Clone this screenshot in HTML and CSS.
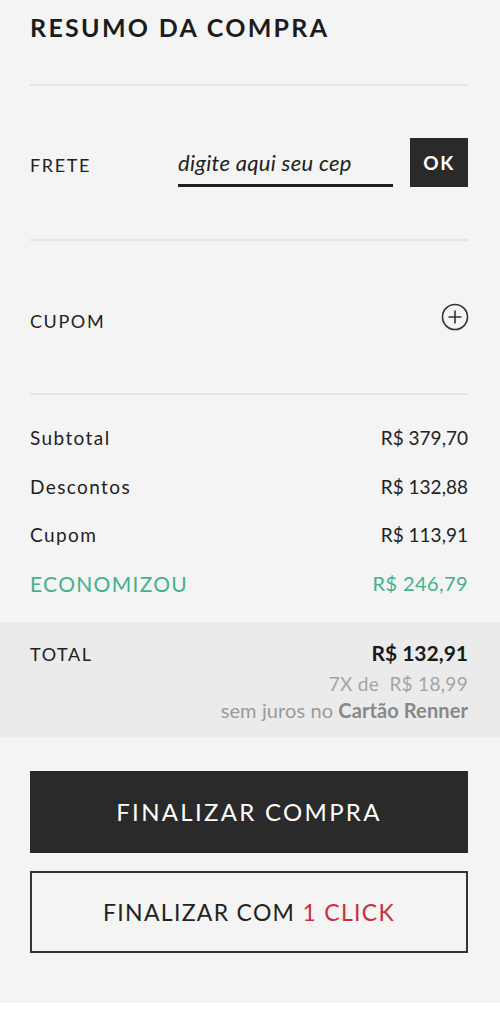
FILE: index.html
```html
<!DOCTYPE html>
<html lang="pt-BR">
<head>
    <meta charset="UTF-8">
    <meta name="viewport" content="width=device-width, initial-scale=1.0">
    <title>Resumo da compra</title>
    <link rel="stylesheet" href="styles.css">
</head>
<body>
    <div class="summary">
        <div class="summary-head">
            <h1>RESUMO DA COMPRA</h1>
        </div>

        <!-- Frete -->
        <div class="section freight">
            <span class="label">FRETE</span>
            <input type="text" class="cep" placeholder="digite aqui seu cep">
            <button class="ok-button">OK</button>
        </div>

        <!-- Cupom -->
        <div class="section coupon">
            <span class="label">CUPOM</span>
            <svg class="plus" width="28" height="28" viewBox="0 0 28 28">
                <circle cx="14" cy="14" r="12.5" fill="none" stroke="#333" stroke-width="1.6"/>
                <path d="M14 7.5v13M7.5 14h13" stroke="#333" stroke-width="1.6"/>
            </svg>
        </div>

        <div class="values">
            <div class="value-row"><span class="name">Subtotal</span><span>R$ 379,70</span></div>
            <div class="value-row"><span class="name">Descontos</span><span>R$ 132,88</span></div>
            <div class="value-row"><span class="name">Cupom</span><span>R$ 113,91</span></div>
            <div class="value-row saved"><span class="name">ECONOMIZOU</span><span>R$ 246,79</span></div>
        </div>
    </div>

    <div class="total-box">
        <span class="label">TOTAL</span>
        <div class="total-values">
            <div class="total-price">R$ 132,91</div>
            <div class="installments">7X de&nbsp; R$ 18,99</div>
            <div class="no-interest">sem juros no <b>Cartão Renner</b></div>
        </div>
    </div>

    <div class="actions">
        <button class="checkout-button">FINALIZAR COMPRA</button>
        <button class="one-click-button">FINALIZAR COM <span>1 CLICK</span></button>
    </div>
</body>
</html>
```

FILE: styles.css
```css
body {
    margin: 0;
    background: #fff;
    font-family: Lato, "Open Sans", sans-serif;
    color: #222;
}
.summary {
    background: #f4f4f4;
    padding: 0 32px 0 30px;
}
.summary-head {
    height: 84px;
    border-bottom: 2px solid #e4e4e4;
}
h1 {
    margin: 0;
    padding-top: 12px;
    font-size: 25px;
    line-height: 30px;
    font-weight: bold;
    letter-spacing: 2.3px;
    color: #1c1c1c;
}
.section {
    display: flex;
    align-items: center;
    border-bottom: 2px solid #e4e4e4;
}
.label {
    font-size: 18px;
    letter-spacing: 1.6px;
    color: #222;
}
.freight {
    height: 153px;
}
.freight .label {
    width: 148px;
    padding-top: 4px;
}
.cep {
    width: 215px;
    height: 46px;
    box-sizing: border-box;
    padding: 0;
    margin-top: 2px;
    border: none;
    border-bottom: 3px solid #1e1e1e;
    background: transparent;
    font-family: Lato, sans-serif;
    font-style: italic;
    font-size: 22px;
    letter-spacing: 0.3px;
    outline: none;
}
.cep::placeholder {
    color: #222;
}
.ok-button {
    margin-left: auto;
    width: 58px;
    height: 49px;
    border: none;
    background: #2a2a2a;
    color: #fff;
    font-family: Lato, sans-serif;
    font-size: 19px;
    font-weight: bold;
    letter-spacing: 1.5px;
}
.coupon {
    height: 152px;
    justify-content: space-between;
}
.coupon .label {
    padding-top: 8px;
}
.plus {
    margin-right: -1px;
}
.values {
    padding: 18px 0 14px;
}
.value-row {
    display: flex;
    justify-content: space-between;
    align-items: center;
    height: 48.7px;
    font-size: 19px;
    color: #222;
}
.value-row .name {
    letter-spacing: 1.4px;
}
.value-row.saved {
    font-size: 20px;
    letter-spacing: 0.4px;
    color: #46b08d;
}
.value-row.saved .name {
    font-size: 21px;
    letter-spacing: 1.3px;
}
.total-box {
    display: flex;
    justify-content: space-between;
    background: #ebebeb;
    padding: 15px 32px 16px 30px;
}
.total-box .label {
    line-height: 34px;
}
.total-values {
    text-align: right;
}
.total-price {
    font-size: 21px;
    font-weight: bold;
    line-height: 32px;
    color: #1a1a1a;
}
.installments {
    font-size: 19px;
    line-height: 30px;
    color: #a4a4a4;
    letter-spacing: 0.3px;
}
.no-interest {
    font-size: 20px;
    line-height: 22px;
    letter-spacing: 0.1px;
    color: #9a9a9a;
}
.no-interest b {
    color: #888;
}
.actions {
    background: #f4f4f4;
    padding: 34px 32px 50px 30px;
    display: flex;
    flex-direction: column;
    gap: 18px;
}
.checkout-button,
.one-click-button {
    height: 82px;
    font-family: Lato, sans-serif;
    cursor: pointer;
}
.checkout-button {
    border: none;
    background: #2a2a2a;
    color: #fff;
    font-size: 24px;
    letter-spacing: 2.3px;
}
.one-click-button {
    border: 2px solid #333;
    background: #f4f4f4;
    color: #222;
    font-size: 23px;
    letter-spacing: 1.3px;
}
.one-click-button span {
    color: #c8303c;
}
```
